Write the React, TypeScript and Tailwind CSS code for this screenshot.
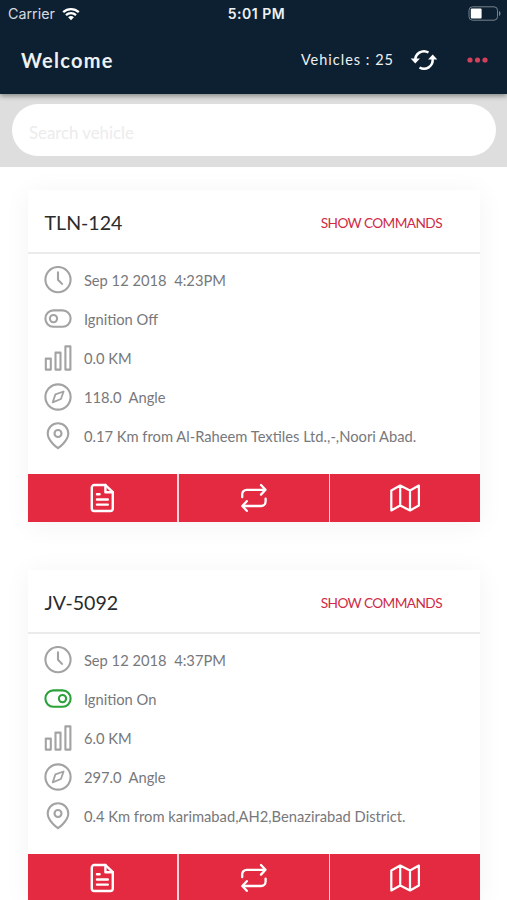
import React from "react";

type Vehicle = {
  name: string;
  time: string;
  on: boolean;
  distance: string;
  angle: string;
  place: string;
};

const vehicles: Vehicle[] = [
  { name: "TLN-124", time: "Sep 12 2018  4:23PM", on: false, distance: "0.0 KM", angle: "118.0  Angle", place: "0.17 Km from Al-Raheem Textiles Ltd.,-,Noori Abad." },
  { name: "JV-5092", time: "Sep 12 2018  4:37PM", on: true, distance: "6.0 KM", angle: "297.0  Angle", place: "0.4 Km from karimabad,AH2,Benazirabad District." },
];

function Glyph({ children, className = "text-[#a3a3a3]" }: { children: React.ReactNode; className?: string }) {
  return (
    <svg width="28" height="28" viewBox="0 0 28 28" fill="none" stroke="currentColor" strokeWidth="2.1" strokeLinecap="round" strokeLinejoin="round" className={`shrink-0 ${className}`}>
      {children}
    </svg>
  );
}

function Row({ icon, text }: { icon: React.ReactNode; text: string }) {
  return (
    <div className="flex h-[39px] items-center gap-3">
      {icon}
      <span className="whitespace-pre pt-px text-[14.72px] leading-5 text-[#77787b]">{text}</span>
    </div>
  );
}

function Card({ v }: { v: Vehicle }) {
  return (
    <section className="h-[332px] shrink-0 bg-white shadow-[0_3px_26px_rgba(0,0,0,0.05)]">
      <div className="flex h-[64px] items-center justify-between border-b-2 border-[#ebebeb] pl-[17px] pr-[38px] pt-[3px]">
        <h2 className="text-[19.6px] leading-6 text-[#2b2b2d]">{v.name}</h2>
        <button className="text-[13.7px] leading-5 tracking-[-0.6px] text-[#cf2b45]">SHOW COMMANDS</button>
      </div>
      <div className="flex h-[220px] flex-col pl-[16.4px] pt-[6px]">
        <Row text={v.time} icon={<Glyph><circle cx="14" cy="13.6" r="12.6" /><path d="M14 6.2v7.500l4 4.200" /></Glyph>} />
        <Row
          text={v.on ? "Ignition On" : "Ignition Off"}
          icon={
            <Glyph className={v.on ? "text-[#2ba13a]" : "text-[#a3a3a3]"}>
              <rect x="1.4" y="5.4" width="25.2" height="16.4" rx="8" />
              <circle cx={v.on ? 18.5 : 9.5} cy="13.6" r="3.6" />
            </Glyph>
          }
        />
        <Row text={v.distance} icon={<Glyph><path d="M1.8 14.6h5v11h-5zM11.5 8.6h5v17h-5zM21.4 2.4h5v23.2h-5z" /></Glyph>} />
        <Row text={v.angle} icon={<Glyph><circle cx="14" cy="14" r="12.6" /><path d="M19.6 8.5l-2.7 7.5-8.2 3.4 2.7-8z" strokeWidth="1.8" /></Glyph>} />
        <Row text={v.place} icon={<Glyph><path d="M24.3 11.5C24.3 19 14 26.2 14 26.2S3.7 19 3.7 11.5a10.3 10.3 0 0 1 20.6 0z" /><circle cx="14" cy="11.5" r="3.5" /></Glyph>} />
      </div>
      <div className="grid h-[48px] grid-cols-3 gap-[1.5px] bg-[#fbd5da]">
        <button className="flex items-center justify-center bg-[#e42a40] text-white">
          <svg width="30" height="30" viewBox="0 0 30 30" fill="none" stroke="currentColor" strokeWidth="2.4" strokeLinecap="round" strokeLinejoin="round">
            <path d="M18.4 2H7.300A2.500 2.500 0 0 0 4.800 4.500v21A2.500 2.500 0 0 0 7.300 28h16a2.500 2.500 0 0 0 2.500-2.500V9.200z" />
            <path d="M18.400 2v7.200h7.400M10 11.200h2.600M10 16.500h10.800M10 21.600h10.800" />
          </svg>
        </button>
        <button className="flex items-center justify-center bg-[#e42a40] text-white">
          <svg width="30" height="30" viewBox="0 0 30 30" fill="none" stroke="currentColor" strokeWidth="2.300" strokeLinecap="round" strokeLinejoin="round">
            <path d="M22 2l4.500 4.800L22 11.600M3.200 14.200v-3a4.400 4.400 0 0 1 4.400-4.400h18.500M7.800 18.200L3.300 23l4.500 4.800M26.600 15.600v3a4.400 4.400 0 0 1-4.400 4.400H3.700" />
          </svg>
        </button>
        <button className="flex items-center justify-center bg-[#e42a40] text-white">
          <svg width="30" height="30" viewBox="0 0 30 30" fill="none" stroke="currentColor" strokeWidth="2.200" strokeLinejoin="round">
            <path d="M1.300 7.500v20l8.900-5 9.800 5 8.900-5v-20l-8.900 5-9.800-5zM10.200 2.500v20M20 7.500v20" />
          </svg>
        </button>
      </div>
    </section>
  );
}

export default function App() {
  return (
    <main className="flex h-[900px] w-full flex-col overflow-hidden bg-white font-['Lato',sans-serif]">
      <header className="relative z-10 h-[94px] shrink-0 bg-[#0d2031] text-white shadow-[0_2px_5px_rgba(0,0,0,0.4)]">
        <div className="grid h-[27px] grid-cols-3 items-center pl-2 pr-[6px] font-['Inter',sans-serif] text-[14px]">
          <div className="flex items-center gap-[7px] text-[#d5dae0]">
            <span className="text-[14.3px]">Carrier</span>
            <svg width="18" height="14" viewBox="0 0 18 14" fill="none" stroke="#fff" strokeWidth="2.300">
              <path d="M1.200 5.200a11.300 11.300 0 0 1 15.600 0M4 8.200a7.300 7.300 0 0 1 10 0" />
              <path d="M9 13.200L6.100 10.300a4.200 4.200 0 0 1 5.800 0z" fill="#fff" stroke="none" />
            </svg>
          </div>
          <span className="pl-[4px] text-center font-semibold tracking-[0.500px] text-[#eef1f3]">5:01 PM</span>
          <svg width="33" height="15" viewBox="0 0 33 15" className="justify-self-end">
            <rect x="1" y=".8" width="28.500" height="13.400" rx="3.500" fill="none" stroke="#77828d" />
            <rect x="2.800" y="2.600" width="10.800" height="9.800" rx="1" fill="#fff" />
            <path d="M31 5v5c1-.4 1.500-1.300 1.500-2.500S32 5.400 31 5z" fill="#77828d" />
          </svg>
        </div>
        <div className="flex h-[66px] items-center pl-[21px] pr-[19px]">
          <h1 className="text-[20px] font-bold leading-6 tracking-[1.250px] text-[#eef1f3]">Welcome</h1>
          <span className="ml-auto text-[14.5px] leading-5 tracking-[1px] text-[#eef1f3]">Vehicles : 25</span>
          <svg width="28" height="24" viewBox="0 0 28 24" fill="none" stroke="#fff" strokeWidth="2.500" className="ml-[16px]">
            <path d="M5.400 13A8.700 8.700 0 0 1 18.500 4.500M22.600 11A8.700 8.700 0 0 1 9.500 19.500" />
            <path d="M.7 11.500h9.200L5.300 16.500zM18.100 12.500h9.200L22.700 7.500z" transform="translate(0 -1)" fill="#fff" stroke="none" />
          </svg>
          <svg width="21" height="6" viewBox="0 0 21 6" fill="#d3405a" className="ml-[29px]">
            <circle cx="3" cy="3" r="2.600" /><circle cx="10.500" cy="3" r="2.600" /><circle cx="18" cy="3" r="2.600" />
          </svg>
        </div>
      </header>
      <div className="h-[73px] shrink-0 bg-[#dedede] pl-3 pr-[11px] pt-[10px]">
        <input placeholder="Search vehicle" className="h-[52px] w-full rounded-full bg-white px-[17px] pt-[4px] text-[16.800px] outline-none placeholder:text-[#ececec]" />
      </div>
      <div className="flex flex-col gap-12 pl-[27.5px] pr-[27px] pt-[23px]">
        {vehicles.map((v) => <Card key={v.name} v={v} />)}
      </div>
    </main>
  );
}
